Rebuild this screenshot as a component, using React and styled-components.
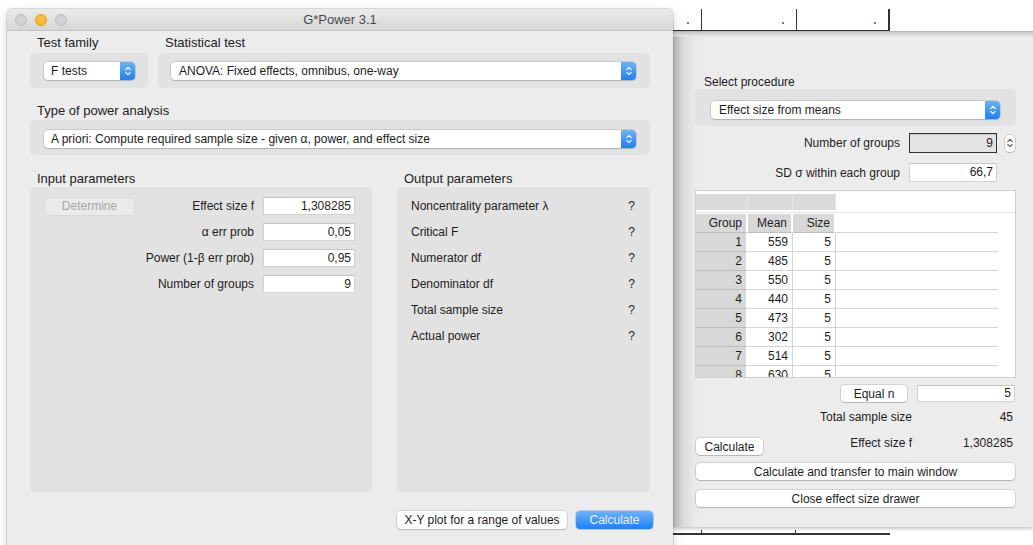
import React from 'react';
import styled, { createGlobalStyle } from 'styled-components';

const GlobalStyle = createGlobalStyle`
  html, body {
    margin: 0;
    padding: 0;
    background: #fff;
  }
  body {
    font-family: "Liberation Sans", Arial, sans-serif;
    color: #1d1d1d;
  }
`;

const Desktop = styled.div`
  display: flex;
  align-items: flex-start;
  width: 1033px;
  height: 545px;
  overflow: hidden;
  background: #fff;
`;

// ---- main window ----

const Window = styled.div`
  position: relative;
  z-index: 2;
  flex: 0 0 666px;
  height: 560px;
  margin: 9px 0 0 7px;
  background: #ececec;
  border-radius: 5px 5px 0 0;
  box-shadow: 0 0 0 1px rgba(0, 0, 0, 0.12), 0 4px 12px rgba(0, 0, 0, 0.18);
`;

const TitleBar = styled.div`
  display: grid;
  grid-template-columns: 1fr auto 1fr;
  align-items: center;
  height: 21px;
  padding: 0 8px;
  border-radius: 5px 5px 0 0;
  background: linear-gradient(#ebebeb, #d6d6d6);
  border-bottom: 1px solid #c4c4c4;
`;

const Lights = styled.div`
  display: flex;
  gap: 8px;
`;

const Light = styled.span`
  width: 12px;
  height: 12px;
  border-radius: 50%;
  box-sizing: border-box;
  background: ${p => p.$color};
  border: 0.5px solid ${p => p.$edge};
`;

const Title = styled.div`
  font-size: 13px;
  color: #4b4b4b;
`;

const Content = styled.div`
  padding: 4px 23px 0;
`;

const Row = styled.div`
  display: flex;
  gap: ${p => p.$gap || 0}px;
  margin-top: ${p => p.$top || 0}px;
`;

const Section = styled.section`
  display: flex;
  flex-direction: column;
  width: ${p => (p.$w ? `${p.$w}px` : 'auto')};
  flex: ${p => (p.$w ? 'none' : 1)};
`;

const SectionTitle = styled.div`
  font-size: 13px;
  line-height: 15px;
  padding-left: 7px;
  margin-bottom: ${p => p.$gap ?? 3}px;
  color: #222;
`;

const Panel = styled.div`
  box-sizing: border-box;
  height: ${p => p.$h}px;
  padding: ${p => p.$pad};
  background: #e2e2e2;
  border-radius: 5px;
`;

const PopupBox = styled.div`
  display: flex;
  height: 18px;
  background: #fff;
  border-radius: 4px;
  box-shadow: 0 0 0 0.5px rgba(0, 0, 0, 0.22), 0 1px 1px rgba(0, 0, 0, 0.12);
  font-size: 12px;
`;

const PopupText = styled.span`
  flex: 1;
  padding-left: ${p => p.$indent || 8}px;
  line-height: 18px;
  white-space: nowrap;
  overflow: hidden;
`;

const PopupArrows = styled.span`
  display: flex;
  align-items: center;
  justify-content: center;
  width: 15px;
  border-radius: 0 4px 4px 0;
  background: linear-gradient(#6ab3fb, #1f80f8);
`;

const Chevrons = ({ color = '#fff' }) => (
  <svg width="8" height="12" viewBox="0 0 8 12">
    <path d="M1.8 4.6 L4 2.4 L6.2 4.6 M1.8 7.4 L4 9.6 L6.2 7.4" fill="none" stroke={color} strokeWidth="1.2" strokeLinecap="round" strokeLinejoin="round" />
  </svg>
);

const Popup = ({ children, indent }) => (
  <PopupBox>
    <PopupText $indent={indent}>{children}</PopupText>
    <PopupArrows>
      <Chevrons />
    </PopupArrows>
  </PopupBox>
);

const ParamGrid = styled.div`
  display: grid;
  grid-template-columns: 1fr auto 92px;
  grid-auto-rows: 18px;
  column-gap: 9px;
  row-gap: 8px;
  align-items: center;
  font-size: 12px;
`;

const ParamLabel = styled.span`
  grid-column: 2;
  text-align: right;
  white-space: nowrap;
`;

const Field = styled.div`
  box-sizing: border-box;
  width: ${p => (p.$w ? `${p.$w}px` : 'auto')};
  height: ${p => p.$h || 18}px;
  line-height: ${p => (p.$h || 18) - 2}px;
  padding-right: 3px;
  text-align: right;
  font-size: 12px;
  background: #fff;
  border: 1px solid #d2d2d2;
  border-top-color: #c4c4c4;
`;

const Button = styled.button`
  box-sizing: border-box;
  display: flex;
  align-items: center;
  justify-content: center;
  width: ${p => (p.$w ? `${p.$w}px` : 'auto')};
  height: ${p => p.$h || 17}px;
  padding: 0 10px;
  margin: 0;
  border: none;
  border-radius: 4px;
  font-family: inherit;
  font-size: 12px;
  color: #1d1d1d;
  background: #fff;
  box-shadow: 0 0 0 0.5px rgba(0, 0, 0, 0.22), 0 1px 1px rgba(0, 0, 0, 0.14);
  white-space: nowrap;
`;

const DisabledButton = styled(Button)`
  grid-column: 1;
  justify-self: start;
  color: #a6a6a6;
  background: #eaeaea;
  box-shadow: 0 0 0 0.5px rgba(0, 0, 0, 0.08);
`;

const DefaultButton = styled(Button)`
  color: #eaf3ff;
  background: linear-gradient(#6bb4fb, #1d7ff8);
  box-shadow: 0 0 0 0.5px rgba(0, 60, 160, 0.35);
`;

const OutputRow = styled.div`
  display: flex;
  justify-content: space-between;
  align-items: center;
  height: 26px;
  font-size: 12px;
  padding-right: 1px;
`;

const Footer = styled.div`
  display: flex;
  justify-content: flex-end;
  gap: 9px;
  margin: 19px -3px 0 0;
`;

// ---- effect size drawer ----

const DrawerColumn = styled.div`
  flex: 1;
  display: flex;
  flex-direction: column;
  min-width: 0;
  height: 545px;
`;

const BackStrip = styled.div`
  box-sizing: border-box;
  height: 31px;
  padding-top: 9px;
  display: flex;
`;

const SheetCells = styled.div`
  display: flex;
  border-bottom: ${p => p.$line || 1}px solid #333;
`;

const SheetCell = styled.div`
  box-sizing: border-box;
  width: ${p => p.$w}px;
  height: 21px;
  display: flex;
  align-items: flex-start;
  justify-content: flex-end;
  padding: 13px 12px 0 0;
  border-right: ${p => p.$edge ?? 1}px solid #333;
`;

const TickCell = styled.div`
  box-sizing: border-box;
  width: ${p => p.$w}px;
  height: 3px;
  border-right: ${p => (p.$tick ? '1px solid #333' : 'none')};
`;

const Dot = styled.span`
  width: 2px;
  height: 2px;
  background: #6f809a;
`;

const Drawer = styled.div`
  box-sizing: border-box;
  height: 496px;
  display: flex;
  flex-direction: column;
  padding: 44px 17px 0 22px;
  background:
    linear-gradient(to bottom, #a6a6a6 0, #c6c6c6 1px, #e4e4e4 5px, rgba(236, 236, 236, 0) 6px),
    linear-gradient(to right, #bcbcbc 0, #dadada 10px, #e8e8e8 20px, #ececec 30px);
  box-shadow: 0 2px 3px rgba(0, 0, 0, 0.22);
  font-size: 12px;
`;

const DrawerLabel = styled.div`
  font-size: 12px;
  line-height: 14px;
  padding-left: 9px;
`;

const FieldRow = styled.div`
  display: flex;
  justify-content: flex-end;
  align-items: center;
  margin-top: ${p => p.$top}px;
  padding-right: ${p => p.$right || 0}px;
`;

const RowLabel = styled.span`
  margin-right: ${p => p.$gap ?? 9}px;
  white-space: nowrap;
`;

const LockedField = styled(Field)`
  background: #e3e3e3;
  border: 1px solid #333;
  padding-right: 3px;
  box-shadow: inset 0 1px 1px rgba(0, 0, 0, 0.12);
`;

const Stepper = styled.span`
  display: flex;
  align-items: center;
  justify-content: center;
  box-sizing: border-box;
  width: 10px;
  height: 17px;
  margin-left: 8px;
  background: #fff;
  border-radius: 4px;
  box-shadow: 0 0 0 0.5px rgba(0, 0, 0, 0.25), 0 1px 1px rgba(0, 0, 0, 0.1);
`;

const Table = styled.div`
  box-sizing: border-box;
  height: 188px;
  margin-top: 8px;
  border: 1px solid #cfcfcf;
  background: #fff;
  overflow: hidden;
`;

const BlankHeader = styled.div`
  display: grid;
  grid-template-columns: 52px 45px 43px 1fr;
  height: 22px;
  box-sizing: border-box;
  padding-top: 3px;
  border-bottom: 1px solid #e2e2e2;
`;

const BlankCell = styled.div`
  height: 16px;
  background: ${p => (p.$fill ? '#dadada' : 'transparent')};
  border-right: ${p => (p.$fill ? '1px solid #e6e6e6' : 'none')};
`;

const GridRow = styled.div`
  display: grid;
  grid-template-columns: 52px 45px 43px 1fr 17px;
  height: ${p => p.$h || 19}px;
  margin-top: ${p => p.$top || 0}px;
  font-size: 12px;
`;

const Cell = styled.div`
  box-sizing: border-box;
  padding-right: 4px;
  text-align: right;
  line-height: 18px;
  white-space: nowrap;
  background: ${p => (p.$shade ? '#d8d8d8' : '#fff')};
  border-right: ${p => (p.$shade ? '2px solid #fff' : '1px solid #d4d4d4')};
  border-bottom: 1px solid ${p => (p.$shade ? '#bdbdbd' : '#d4d4d4')};
`;

const RestCell = styled.div`
  border-bottom: 1px solid #d4d4d4;
`;

const Stat = styled.div`
  display: flex;
  align-items: flex-start;
  margin-top: ${p => p.$top}px;
  line-height: 14px;
`;

const StatValue = styled.span`
  width: 99px;
  margin-left: 5px;
  padding-right: 3px;
  box-sizing: border-box;
  text-align: right;
`;

const Spacer = styled.span`
  flex: 1;
`;

const WideButton = styled(Button)`
  width: calc(100% - 2px);
  margin: ${p => p.$top}px 1px 0;
`;

const BackBottom = styled.div`
  flex: 1;
  padding-top: 3px;
  display: flex;
  align-items: flex-start;
`;

const means = [559, 485, 550, 440, 473, 302, 514, 630];

const inputs = [
  ['α err prob', '0,05'],
  ['Power (1-β err prob)', '0,95'],
  ['Number of groups', '9'],
];

const outputs = [
  'Noncentrality parameter λ',
  'Critical F',
  'Numerator df',
  'Denominator df',
  'Total sample size',
  'Actual power',
];

export default function App() {
  return (
    <Desktop>
      <GlobalStyle />
      <Window>
        <TitleBar>
          <Lights>
            <Light $color="#d2d2d2" $edge="#bcbcbc" />
            <Light $color="#f6bd2f" $edge="#dca428" />
            <Light $color="#d2d2d2" $edge="#bcbcbc" />
          </Lights>
          <Title>G*Power 3.1</Title>
          <span />
        </TitleBar>

        <Content>
          <Row $gap={10}>
            <Section $w={118}>
              <SectionTitle>Test family</SectionTitle>
              <Panel $h={35} $pad="9px 13px 0 14px">
                <Popup indent={7}>F tests</Popup>
              </Panel>
            </Section>
            <Section>
              <SectionTitle>Statistical test</SectionTitle>
              <Panel $h={35} $pad="9px 14px 0 13px">
                <Popup>ANOVA: Fixed effects, omnibus, one-way</Popup>
              </Panel>
            </Section>
          </Row>

          <Row $top={15}>
            <Section>
              <SectionTitle $gap={2}>Type of power analysis</SectionTitle>
              <Panel $h={35} $pad="10px 14px 0 14px">
                <Popup indent={7}>A priori: Compute required sample size - given α, power, and effect size</Popup>
              </Panel>
            </Section>
          </Row>

          <Row $top={16} $gap={25}>
            <Section $w={342}>
              <SectionTitle $gap={1}>Input parameters</SectionTitle>
              <Panel $h={305} $pad="10px 17px 0 15px">
                <ParamGrid>
                  <DisabledButton $w={89}>Determine</DisabledButton>
                  <ParamLabel>Effect size f</ParamLabel>
                  <Field>1,308285</Field>
                  {inputs.map(([label, value]) => (
                    <React.Fragment key={label}>
                      <ParamLabel>{label}</ParamLabel>
                      <Field>{value}</Field>
                    </React.Fragment>
                  ))}
                </ParamGrid>
              </Panel>
            </Section>
            <Section $w={253}>
              <SectionTitle $gap={1}>Output parameters</SectionTitle>
              <Panel $h={305} $pad="6px 14px 0 14px">
                {outputs.map(label => (
                  <OutputRow key={label}>
                    <span>{label}</span>
                    <span>?</span>
                  </OutputRow>
                ))}
              </Panel>
            </Section>
          </Row>

          <Footer>
            <Button $w={170} $h={18}>X-Y plot for a range of values</Button>
            <DefaultButton $w={77} $h={18}>Calculate</DefaultButton>
          </Footer>
        </Content>
      </Window>

      <DrawerColumn>
        <BackStrip>
          <SheetCells>
            <SheetCell $w={29}><Dot /></SheetCell>
            <SheetCell $w={95}><Dot /></SheetCell>
            <SheetCell $w={93} $edge={2}><Dot /></SheetCell>
          </SheetCells>
        </BackStrip>

        <Drawer>
          <DrawerLabel>Select procedure</DrawerLabel>
          <Panel $h={37} $pad="12px 16px 0 16px">
            <Popup>Effect size from means</Popup>
          </Panel>

          <FieldRow $top={7} $right={1}>
            <RowLabel>Number of groups</RowLabel>
            <LockedField $w={88} $h={20}>9</LockedField>
            <Stepper>
              <Chevrons color="#555" />
            </Stepper>
          </FieldRow>

          <FieldRow $top={10} $right={19}>
            <RowLabel>SD σ within each group</RowLabel>
            <Field $w={88} $h={19}>66,7</Field>
          </FieldRow>

          <Table>
            <BlankHeader>
              <BlankCell $fill />
              <BlankCell $fill />
              <BlankCell $fill />
              <BlankCell />
            </BlankHeader>
            <GridRow $top={1} $h={19}>
              <Cell $shade>Group</Cell>
              <Cell $shade>Mean</Cell>
              <Cell $shade>Size</Cell>
              <RestCell />
            </GridRow>
            {means.map((mean, i) => (
              <GridRow key={i}>
                <Cell $shade>{i + 1}</Cell>
                <Cell>{mean}</Cell>
                <Cell>5</Cell>
                <RestCell />
              </GridRow>
            ))}
          </Table>

          <FieldRow $top={7} $right={1}>
            <Button $w={66} style={{ marginRight: 10 }}>Equal n</Button>
            <Field $w={98} $h={17}>5</Field>
          </FieldRow>

          <Stat $top={8}>
            <Spacer />
            <span>Total sample size</span>
            <StatValue>45</StatValue>
          </Stat>

          <Stat $top={12}>
            <Button $w={67} style={{ marginTop: 2, marginLeft: 1 }}>Calculate</Button>
            <Spacer />
            <span>Effect size f</span>
            <StatValue>1,308285</StatValue>
          </Stat>

          <WideButton $top={8}>Calculate and transfer to main window</WideButton>
          <WideButton $top={10}>Close effect size drawer</WideButton>
        </Drawer>

        <BackBottom>
          <SheetCells $line={2}>
            <TickCell $w={29} $tick />
            <TickCell $w={94} $tick />
            <TickCell $w={94} />
          </SheetCells>
        </BackBottom>
      </DrawerColumn>
    </Desktop>
  );
}
